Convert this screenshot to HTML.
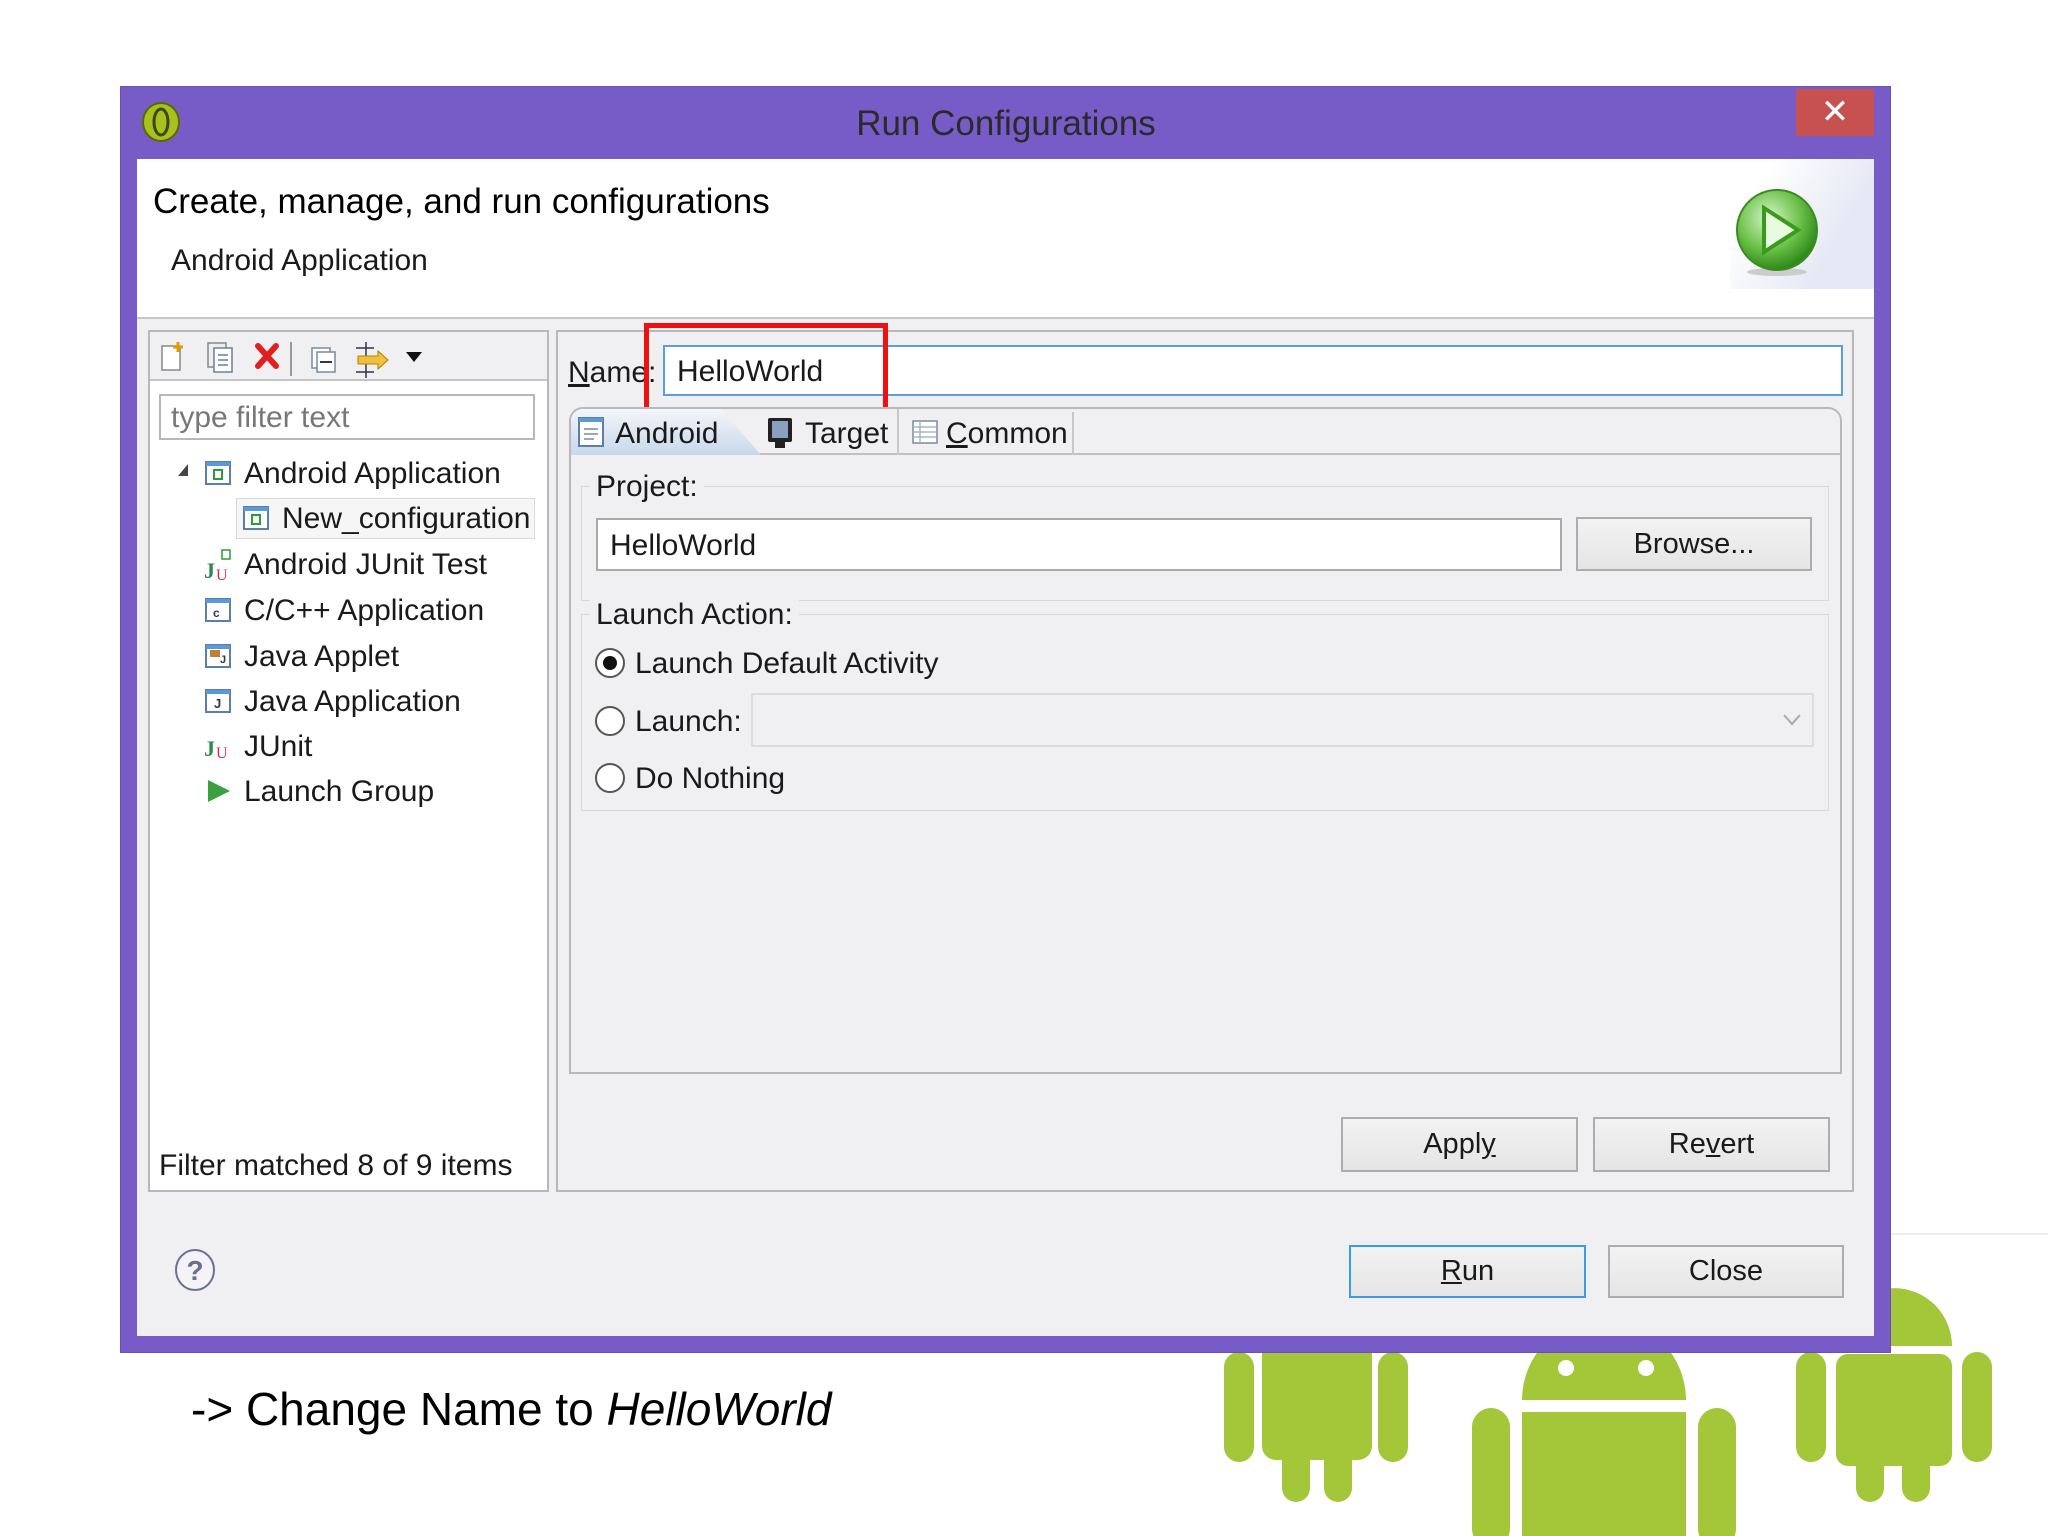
<!DOCTYPE html>
<html><head><meta charset="utf-8"><style>
*{box-sizing:border-box;margin:0;padding:0}
body{width:2048px;height:1536px;background:#fff;position:relative;overflow:hidden;font-family:"Liberation Sans",sans-serif;color:#1a1a1a}
.a{position:absolute}
.t{font-size:30px;white-space:nowrap;line-height:1}
.btn{position:absolute;border:2px solid #adadad;background:linear-gradient(#f2f2f2,#e5e5e5);font-size:29px;text-align:center;display:flex;align-items:center;justify-content:center}
.radio{position:absolute;width:30px;height:30px;border-radius:50%;border:2px solid #555;background:#fff}
u{text-decoration:underline}
</style></head><body>

<svg class="a" style="left:0;top:0" width="2048" height="1536">
 <g fill="#a4c639">
  <rect x="1262" y="1340" width="110" height="120" rx="14"/>
  <rect x="1224" y="1352" width="30" height="110" rx="15"/>
  <rect x="1378" y="1352" width="30" height="110" rx="15"/>
  <rect x="1282" y="1440" width="28" height="62" rx="14"/>
  <rect x="1324" y="1440" width="28" height="62" rx="14"/>
  <path d="M1522 1400 a82 82 0 0 1 164 0 z"/>
  <rect x="1522" y="1412" width="164" height="130"/>
  <rect x="1472" y="1408" width="38" height="140" rx="19"/>
  <rect x="1698" y="1408" width="38" height="140" rx="19"/>
  <path d="M1836 1346 a58 58 0 0 1 116 0 z"/>
  <rect x="1836" y="1354" width="116" height="112" rx="12"/>
  <rect x="1796" y="1352" width="30" height="110" rx="15"/>
  <rect x="1962" y="1352" width="30" height="110" rx="15"/>
  <rect x="1856" y="1440" width="28" height="62" rx="14"/>
  <rect x="1902" y="1440" width="28" height="62" rx="14"/>
 </g>
 <g fill="#fff"><circle cx="1566" cy="1368" r="8"/><circle cx="1646" cy="1368" r="8"/><circle cx="1878" cy="1326" r="6"/></g>
 <line x1="1891" y1="1234" x2="2048" y2="1234" stroke="#eee" stroke-width="2"/>
</svg>

<div class="a" style="left:120px;top:86px;width:1771px;height:1267px;background:#775cc7;border:1px solid #6a50b8"></div>
<div class="a" style="left:1796px;top:89px;width:78px;height:47px;background:#c75050;color:#fff;font-size:34px;text-align:center;line-height:47px">✕</div>
<svg class="a" style="left:141px;top:102px" width="40" height="40"><ellipse cx="20" cy="20" rx="18" ry="19" fill="#a8c020" stroke="#5a6a00" stroke-width="2"/><ellipse cx="20" cy="20" rx="7" ry="13" fill="none" stroke="#3b4800" stroke-width="3"/></svg>
<div class="a t" style="left:0;width:2012px;top:106px;text-align:center;font-size:35px;color:#2a2a2a">Run Configurations</div>

<div class="a" style="left:137px;top:159px;width:1737px;height:1177px;background:#f0eff2"></div>
<div class="a" style="left:137px;top:159px;width:1737px;height:160px;background:#fff;border-bottom:2px solid #c8c8c8"></div>
<div class="a" style="left:1730px;top:159px;width:144px;height:130px;background:linear-gradient(120deg,#fff 20%,#e6e9f5 70%)"></div>
<div class="a t" style="left:153px;top:184px;font-size:35px;color:#000">Create, manage, and run configurations</div>
<div class="a t" style="left:171px;top:246px;font-size:30px">Android Application</div>
<svg class="a" style="left:1734px;top:188px" width="86" height="90"><defs><radialGradient id="g" cx="40%" cy="35%" r="65%"><stop offset="0" stop-color="#d6f5c8"/><stop offset=".6" stop-color="#6cc24a"/><stop offset="1" stop-color="#2f8a18"/></radialGradient></defs><ellipse cx="43" cy="84" rx="30" ry="4" fill="#ccc"/><circle cx="43" cy="42" r="40" fill="url(#g)" stroke="#3c8a20" stroke-width="2"/><path d="M30 20 L64 42 L30 64 Z" fill="#e8fadf" stroke="#3a9a1e" stroke-width="4"/></svg>

<div class="a" style="left:148px;top:330px;width:401px;height:862px;background:#fff;border:2px solid #b8b8b8"></div>
<div class="a" style="left:150px;top:332px;width:397px;height:49px;background:#f0eff2;border-bottom:2px solid #c4c4c4"></div>
<svg class="a" style="left:158px;top:338px" width="280" height="40">
 <rect x="4" y="8" width="18" height="24" fill="#fff" stroke="#888" stroke-width="1.5"/><path d="M20 4v10M15 9h10" stroke="#d8a000" stroke-width="3"/>
 <rect x="50" y="5" width="18" height="24" fill="#eee" stroke="#888" stroke-width="1.5"/><rect x="56" y="10" width="18" height="24" fill="#fff" stroke="#6a7fa0" stroke-width="1.5"/><path d="M60 17h10M60 22h10M60 27h10" stroke="#6a7fa0" stroke-width="1.5"/>
 <path d="M100 8l18 20M118 8l-18 20" stroke="#e02020" stroke-width="6" stroke-linecap="round"/>
 <line x1="133" y1="4" x2="133" y2="38" stroke="#999" stroke-width="2"/>
 <rect x="154" y="10" width="18" height="20" fill="#fff" stroke="#7a8aa0" stroke-width="1.5"/><rect x="159" y="14" width="18" height="20" fill="#fff" stroke="#7a8aa0" stroke-width="1.5"/><path d="M162 24h12" stroke="#335" stroke-width="2"/>
 <path d="M198 10h18M198 34h18M208 4v36" stroke="#334" stroke-width="1.5"/><path d="M200 18h20v-5l10 9-10 9v-5h-20z" fill="#f0c040" stroke="#b08000"/>
 <path d="M248 14h16l-8 10z" fill="#111"/>
</svg>
<div class="a" style="left:159px;top:394px;width:376px;height:46px;border:2px solid #b8b8b8;background:#fff"></div>
<div class="a t" style="left:171px;top:403px;color:#777">type filter text</div>
<div class="a" style="left:236px;top:498px;width:299px;height:41px;border:1px solid #dadada;background:#f6f6f6"></div>
<svg class="a" style="left:176px;top:462px" width="16" height="16"><path d="M12 2v12H2z" fill="#444"/></svg>
<svg class="a" style="left:0;top:0" width="300" height="820">
 <g fill="#fff" stroke="#5a7fa8" stroke-width="2">
  <rect x="206" y="462" width="24" height="22"/><rect x="244" y="507" width="24" height="22"/>
  <rect x="206" y="599" width="24" height="22"/><rect x="206" y="645" width="24" height="22"/><rect x="206" y="690" width="24" height="22"/>
 </g>
 <g fill="#5a9ad8"><rect x="206" y="462" width="24" height="4"/><rect x="244" y="507" width="24" height="4"/><rect x="206" y="599" width="24" height="4"/><rect x="206" y="645" width="24" height="4"/><rect x="206" y="690" width="24" height="4"/></g>
 <path d="M214 470h8v9h-8z" fill="none" stroke="#2a9a3a" stroke-width="2"/><path d="M252 515h8v9h-8z" fill="none" stroke="#2a9a3a" stroke-width="2"/>
 <text x="213" y="617" font-size="12" font-weight="bold" fill="#335" font-family="Liberation Sans">c</text>
 <text x="214" y="708" font-size="13" font-weight="bold" fill="#335" font-family="Liberation Sans">J</text>
 <rect x="210" y="650" width="10" height="7" fill="#c08030"/><text x="220" y="663" font-size="11" font-weight="bold" fill="#335" font-family="Liberation Sans">J</text>
 <text x="204" y="578" font-size="22" font-weight="bold" fill="#2a8a4a" font-family="Liberation Serif">J</text><text x="216" y="580" font-size="16" fill="#d03050" font-family="Liberation Serif">U</text><path d="M222 550h8v9h-8z" fill="none" stroke="#2a9a3a" stroke-width="1.5"/>
 <text x="204" y="756" font-size="22" font-weight="bold" fill="#2a8a4a" font-family="Liberation Serif">J</text><text x="216" y="758" font-size="16" fill="#d03050" font-family="Liberation Serif">U</text>
 <path d="M208 780l22 11-22 11z" fill="#3aa040"/>
</svg>
<div class="a t" style="left:244px;top:459px">Android Application</div>
<div class="a t" style="left:282px;top:504px">New_configuration</div>
<div class="a t" style="left:244px;top:550px">Android JUnit Test</div>
<div class="a t" style="left:244px;top:596px">C/C++ Application</div>
<div class="a t" style="left:244px;top:642px">Java Applet</div>
<div class="a t" style="left:244px;top:687px">Java Application</div>
<div class="a t" style="left:244px;top:732px">JUnit</div>
<div class="a t" style="left:244px;top:777px">Launch Group</div>
<div class="a t" style="left:159px;top:1151px">Filter matched 8 of 9 items</div>

<div class="a" style="left:556px;top:330px;width:1298px;height:862px;border:2px solid #b8b8b8"></div>
<div class="a t" style="left:568px;top:358px"><u>N</u>ame:</div>
<div class="a" style="left:663px;top:345px;width:1180px;height:51px;border:2px solid #5a9ee0;background:#fff"></div>
<div class="a t" style="left:677px;top:357px">HelloWorld</div>
<div class="a" style="left:644px;top:323px;width:244px;height:124px;border:5px solid #ee1111"></div>

<div class="a" style="left:569px;top:407px;width:1273px;height:667px;border:2px solid #b8b8b8;border-top-left-radius:14px;border-top-right-radius:14px"></div>
<div class="a" style="left:571px;top:409px;width:1269px;height:46px;background:#f0eff2;border-bottom:2px solid #c0c0c0;border-top-left-radius:12px;border-top-right-radius:12px"></div>
<div class="a" style="left:571px;top:409px;width:190px;height:46px;background:linear-gradient(#f4f6fa,#c8d8ea);clip-path:polygon(0 0,150px 0,190px 100%,0 100%);border-top-left-radius:12px"></div>
<div class="a" style="left:897px;top:409px;width:2px;height:46px;background:#c8c8c8"></div>
<div class="a" style="left:1072px;top:412px;width:2px;height:43px;background:#c8c8c8"></div>
<svg class="a" style="left:577px;top:416px" width="300" height="36">
 <rect x="2" y="2" width="24" height="28" fill="#fff" stroke="#5a7fa8" stroke-width="2"/><rect x="2" y="2" width="24" height="4" fill="#5a9ad8"/><path d="M7 13h14M7 18h14M7 23h10" stroke="#7a8aa0" stroke-width="1.5"/>
 <rect x="191" y="2" width="24" height="24" rx="2" fill="#222"/><rect x="195" y="5" width="16" height="17" fill="#8aa0c0"/><rect x="198" y="26" width="10" height="6" fill="#222"/>
</svg>
<svg class="a" style="left:912px;top:420px" width="30" height="26"><rect x="1" y="1" width="24" height="22" fill="#fff" stroke="#7a8aa0" stroke-width="1.5"/><path d="M1 7h24M1 12h24M1 17h24M8 1v22" stroke="#9aa8ba" stroke-width="1.2"/></svg>
<div class="a t" style="left:615px;top:419px">Android</div>
<div class="a t" style="left:805px;top:419px">Target</div>
<div class="a t" style="left:946px;top:419px"><u>C</u>ommon</div>

<div class="a" style="left:581px;top:486px;width:1248px;height:115px;border:1px solid #d8d8d8"></div>
<div class="a t" style="left:590px;top:472px;background:#f0eff2;padding:0 6px">Project:</div>
<div class="a" style="left:596px;top:518px;width:966px;height:53px;border:2px solid #aaa;background:#fff"></div>
<div class="a t" style="left:610px;top:531px">HelloWorld</div>
<div class="btn" style="left:1576px;top:517px;width:236px;height:54px">Browse...</div>

<div class="a" style="left:581px;top:614px;width:1248px;height:197px;border:1px solid #d8d8d8"></div>
<div class="a t" style="left:590px;top:600px;background:#f0eff2;padding:0 6px">Launch Action:</div>
<div class="radio" style="left:595px;top:648px"><div style="position:absolute;left:6px;top:6px;width:14px;height:14px;border-radius:50%;background:#111"></div></div>
<div class="a t" style="left:635px;top:649px">Launch Default Activity</div>
<div class="radio" style="left:595px;top:706px"></div>
<div class="a t" style="left:635px;top:707px">Launch:</div>
<div class="a" style="left:751px;top:693px;width:1063px;height:54px;border:2px solid #dcdbe0;background:#f0eff2"></div>
<svg class="a" style="left:1782px;top:712px" width="20" height="16"><path d="M2 3l8 9 8-9" fill="none" stroke="#aaa" stroke-width="2"/></svg>
<div class="radio" style="left:595px;top:763px"></div>
<div class="a t" style="left:635px;top:764px">Do Nothing</div>

<div class="btn" style="left:1341px;top:1117px;width:237px;height:55px">Appl<u>y</u></div>
<div class="btn" style="left:1593px;top:1117px;width:237px;height:55px">Re<u>v</u>ert</div>

<svg class="a" style="left:173px;top:1248px" width="44" height="44"><ellipse cx="22" cy="22" rx="19" ry="20" fill="#f4f4f8" stroke="#6a7090" stroke-width="2"/><text x="22" y="32" text-anchor="middle" font-size="28" font-weight="bold" fill="#6a7090" font-family="Liberation Sans">?</text></svg>
<div class="btn" style="left:1349px;top:1245px;width:237px;height:53px;border-color:#3c9be8"><u>R</u>un</div>
<div class="btn" style="left:1608px;top:1245px;width:236px;height:53px">Close</div>

<div class="a t" style="left:191px;top:1386px;font-size:46px;color:#000">-&gt; Change Name to <i>HelloWorld</i></div>
</body></html>
